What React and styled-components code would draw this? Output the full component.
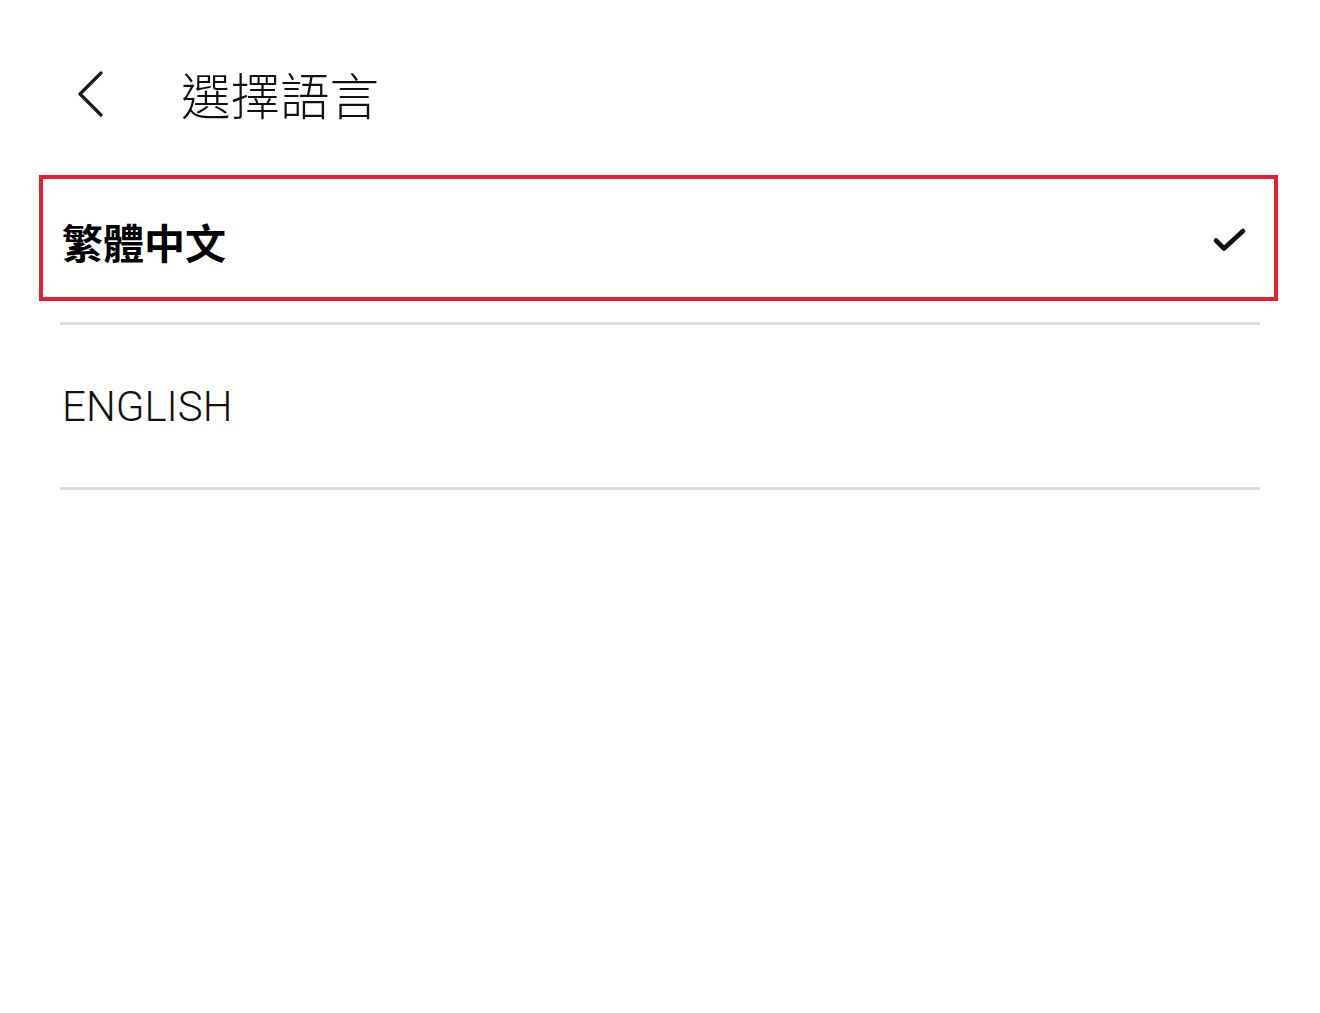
import React, { useState } from 'react';
import styled, { createGlobalStyle, css } from 'styled-components';

const GlobalStyle = createGlobalStyle`
  body {
    margin: 0;
    background: #ffffff;
    font-family: Roboto, "Noto Sans CJK TC", sans-serif;
    color: #111111;
  }
`;

const Page = styled.div`
  width: 1320px;
  min-height: 1013px;
  background: #ffffff;
`;

const Header = styled.div`
  display: flex;
  align-items: center;
  box-sizing: border-box;
  height: 160px;
  padding: 28px 0 0 76px;
`;

const BackButton = styled.button`
  display: flex;
  align-items: center;
  justify-content: center;
  width: 30px;
  height: 46px;
  padding: 0;
  border: none;
  background: none;
  cursor: pointer;
  color: #1a1a1a;
`;

const Title = styled.h1`
  margin: 0 0 0 75px;
  font-family: "Noto Sans CJK TC", sans-serif;
  font-size: 49.5px;
  font-weight: 300;
  line-height: 1;
  color: #111111;
`;

const List = styled.div`
  display: flex;
  flex-direction: column;
  padding: 0 60px;
`;

const Item = styled.div`
  display: flex;
  align-items: center;
  height: 162px;
  border-bottom: 3px solid #dddddd;
  cursor: pointer;
`;

const Frame = styled.div`
  display: flex;
  align-items: center;
  justify-content: space-between;
  flex: 1;
  height: 126px;
  box-sizing: border-box;
  margin: 0 -18px 6px -21px;
  padding: 0 27px 0 19px;
  border: 4px solid transparent;
  ${(props) =>
    props.selected &&
    css`
      border-color: #e3202f;
    `}
`;

const Label = styled.span`
  line-height: 1;
  ${(props) =>
    props.selected
      ? css`
          margin-top: 6px;
          font-family: "Noto Sans CJK TC", sans-serif;
          font-size: 41px;
          font-weight: 700;
          color: #000000;
        `
      : css`
          margin-top: 8px;
          font-family: Roboto, "Noto Sans CJK TC", sans-serif;
          font-size: 42px;
          font-weight: 300;
          color: #111111;
        `}
`;

const CheckMark = styled.span`
  display: flex;
  margin-top: 6px;
`;

const ChevronLeft = () => (
  <svg width="30" height="46" viewBox="0 0 30 46" fill="none">
    <path d="M25 2 L4 23 L25 44" stroke="currentColor" strokeWidth="3.2" strokeLinecap="round" strokeLinejoin="round" />
  </svg>
);

const Check = () => (
  <CheckMark>
    <svg width="36" height="28" viewBox="0 0 36 28" fill="none">
      <path d="M5 13.5 L13 21.5 L32 4" stroke="#111111" strokeWidth="4.6" strokeLinecap="round" strokeLinejoin="round" />
    </svg>
  </CheckMark>
);

const languages = [
  { id: 'zh-TW', name: '繁體中文' },
  { id: 'en', name: 'ENGLISH' },
];

export default function App() {
  const [current, setCurrent] = useState('zh-TW');

  return (
    <Page>
      <GlobalStyle />
      <Header>
        <BackButton aria-label="back">
          <ChevronLeft />
        </BackButton>
        <Title>選擇語言</Title>
      </Header>
      <List>
        {languages.map((lang) => {
          const selected = lang.id === current;
          return (
            <Item key={lang.id} onClick={() => setCurrent(lang.id)}>
              <Frame selected={selected}>
                <Label selected={selected}>{lang.name}</Label>
                {selected && <Check />}
              </Frame>
            </Item>
          );
        })}
      </List>
    </Page>
  );
}
